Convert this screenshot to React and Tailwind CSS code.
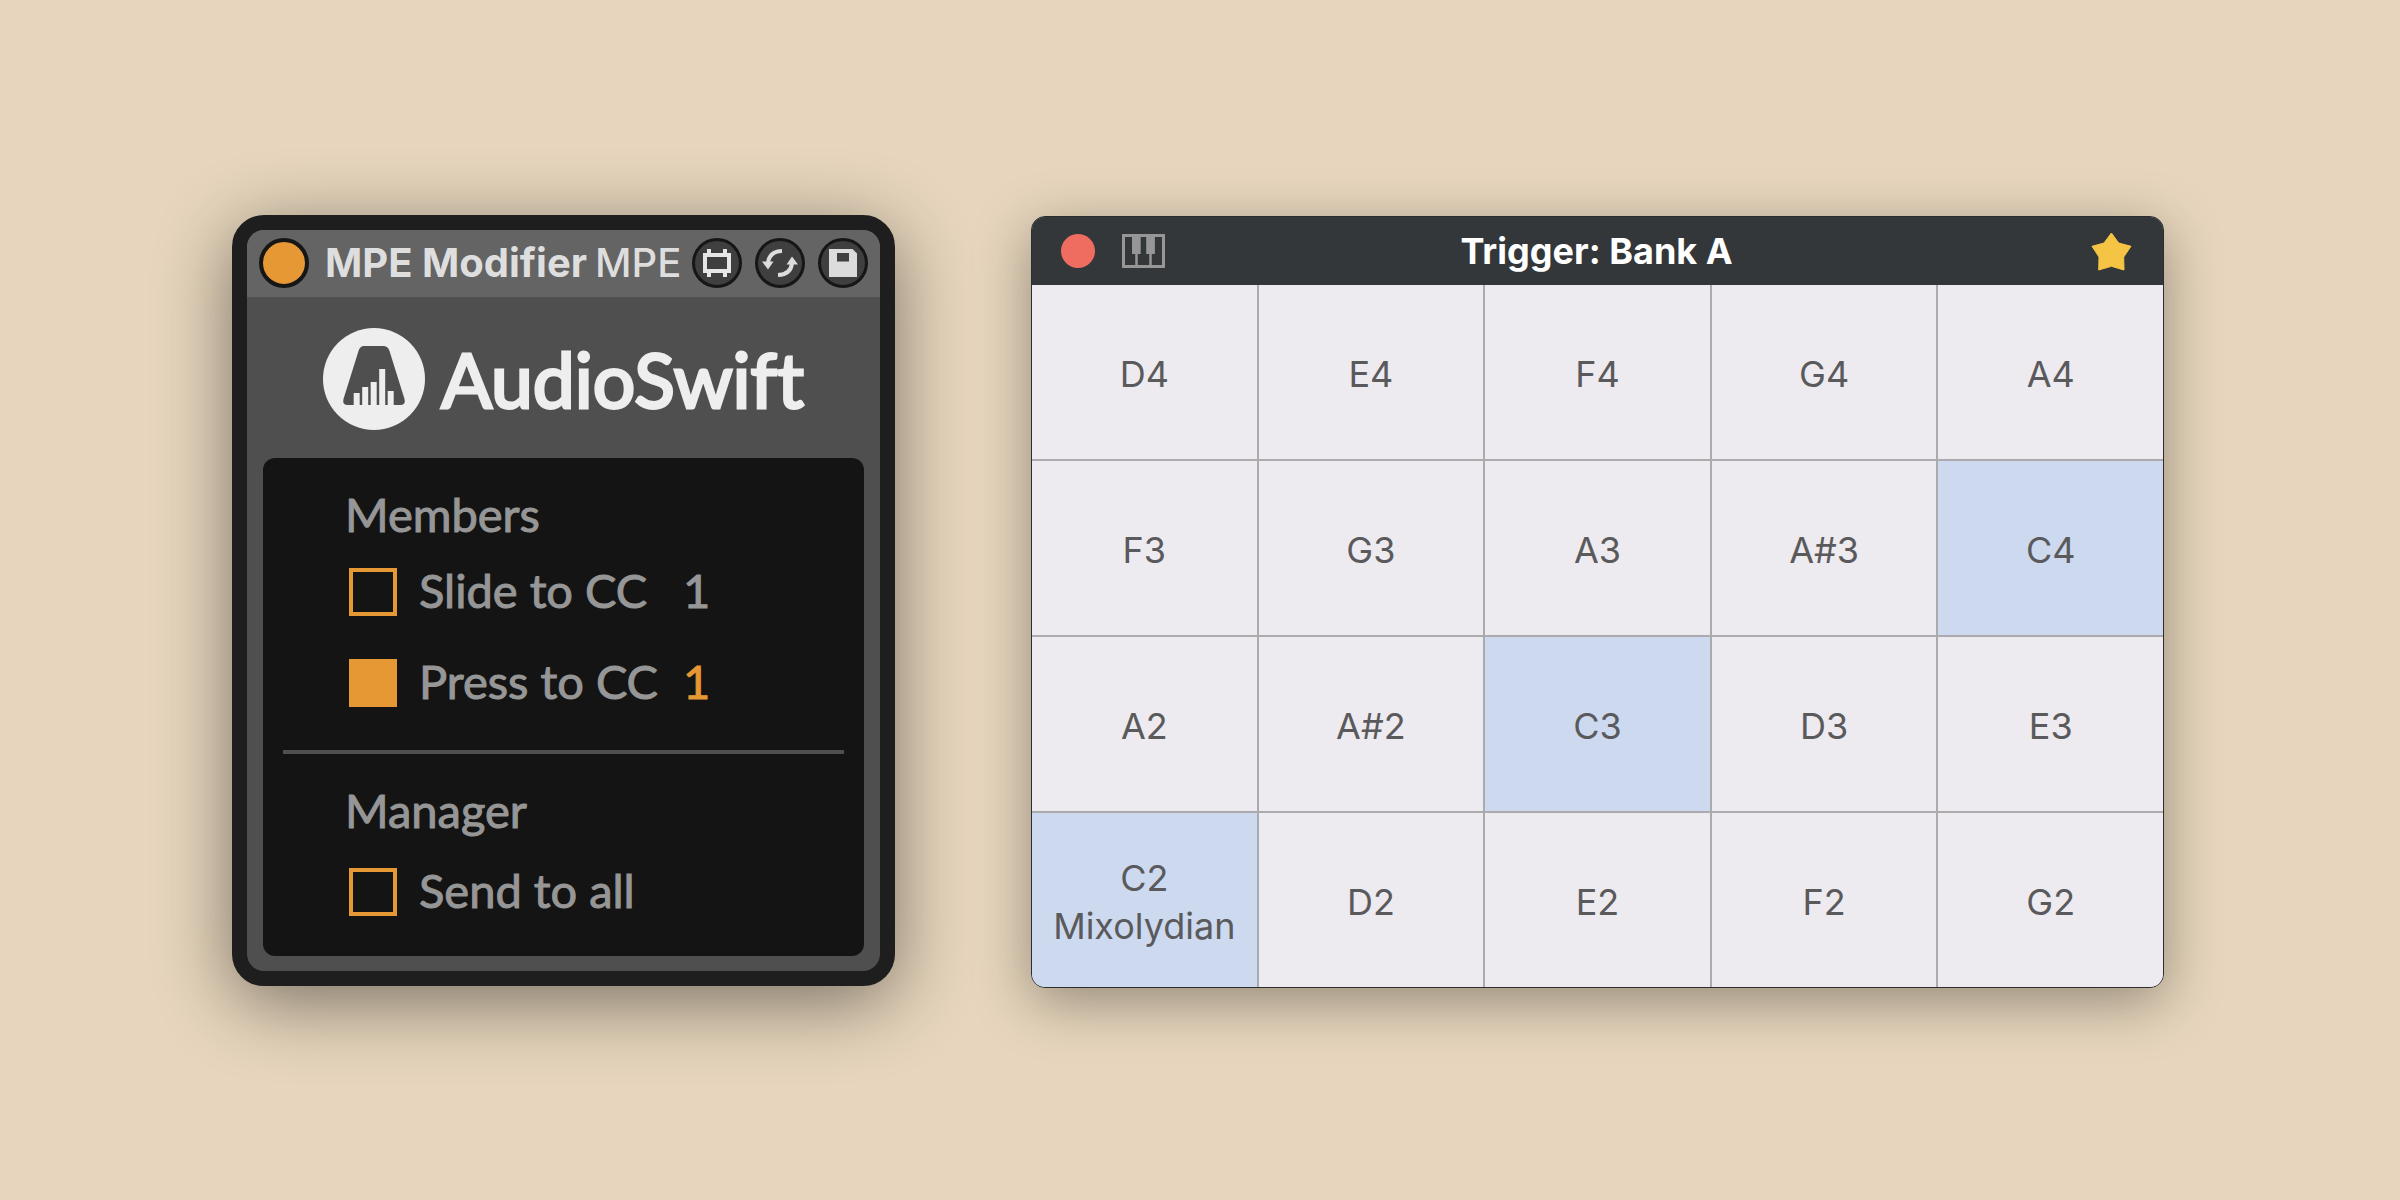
import { useState } from "react";

const pads = [
  ["D4"], ["E4"], ["F4"], ["G4"], ["A4"],
  ["F3"], ["G3"], ["A3"], ["A#3"], ["C4"],
  ["A2"], ["A#2"], ["C3"], ["D3"], ["E3"],
  ["C2", "Mixolydian"], ["D2"], ["E2"], ["F2"], ["G2"],
];

const AudioSwiftMark = () => (
  <svg viewBox="0 0 102 102" className="w-[102px] h-[102px] shrink-0">
    <circle cx="51" cy="51" r="51" fill="#eeeeee" />
    <path
      d="M41 18H60Q65 18 66.500 23L81.500 71Q83 77 77 77H25Q19 77 20.500 71L35.500 23Q37 18 41 18Z"
      fill="#4f4f4f"
    />
    <g fill="#eeeeee">
      <rect x="30.700" y="65" width="6" height="13" />
      <rect x="39.200" y="59" width="6" height="19" />
      <rect x="47.700" y="54" width="6" height="24" />
      <rect x="56.200" y="41" width="6" height="37" />
      <rect x="64.700" y="63" width="6" height="15" />
    </g>
  </svg>
);

const FrameIcon = () => (
  <svg viewBox="0 0 44 44" className="w-full h-full">
    <path d="M10 14H34V30H10Z" fill="none" stroke="#e6e6e6" strokeWidth="4" />
    <path d="M14 8v5M30 8v5M14 31v5M30 31v5" stroke="#e6e6e6" strokeWidth="4" />
  </svg>
);

const SwapIcon = () => (
  <svg viewBox="0 0 44 44" className="w-full h-full">
    <path d="M24 10Q11 10.500 10 22" fill="none" stroke="#dcdcdc" strokeWidth="4" />
    <path d="M4 20.500H15.500L10 28.500Z" fill="#dcdcdc" />
    <path d="M20 34Q33 33.500 34 22" fill="none" stroke="#dcdcdc" strokeWidth="4" />
    <path d="M28.500 23.500H40L34 15.500Z" fill="#dcdcdc" />
  </svg>
);

const SaveIcon = () => (
  <svg viewBox="0 0 44 44" className="w-full h-full">
    <path d="M8 8H31.500L36 12.500V36H8Z" fill="#dcdcdc" />
    <path d="M16 12H28V20.500H16Z" fill="#3f3f3f" />
  </svg>
);

const PianoIcon = () => (
  <svg viewBox="0 0 43 34" className="w-[43px] h-[34px]">
    <path d="M1.500 1.500H41.500V32.500H1.500Z" fill="none" stroke="#969696" strokeWidth="3" />
    <path d="M14.500 18V32M28.500 18V32" stroke="#969696" strokeWidth="2.500" />
    <path d="M10 2h8.700v18H10ZM24.200 2h8.700v18H24.200Z" fill="#969696" />
  </svg>
);

const StarIcon = () => (
  <svg viewBox="0 0 41 39" className="w-[41px] h-[39px]">
    <path
      d="M20.400 1L27.700 11L40 14.300L32.700 25L33 38L20.400 34.300L7.700 38L8 25L1 14.300L13 11Z"
      fill="#f6c444"
      stroke="#f6c444"
      strokeLinejoin="round"
    />
  </svg>
);

const RoundButton = ({ label, children }) => (
  <button
    aria-label={label}
    className="w-[50px] h-[50px] rounded-full border-3 border-[#161616] bg-[#3f3f3f]"
  >
    {children}
  </button>
);

const CheckRow = ({ id, label, checked, onChange, value, className = "" }) => (
  <div className={`flex items-start ${className}`}>
    <input
      id={id}
      type="checkbox"
      checked={checked}
      onChange={onChange}
      className="appearance-none shrink-0 w-12 h-12 mt-1.5 border-4 border-[#e59834] checked:bg-[#e59834]"
    />
    <label htmlFor={id} className="w-[264px] ml-[22px] whitespace-nowrap">
      {label}
    </label>
    {value && (
      <input
        type="text"
        aria-label={`${label} number`}
        defaultValue={value}
        className={`w-16 h-14 p-0 bg-transparent outline-none ${checked ? "text-[#e59834]" : ""}`}
      />
    )}
  </div>
);

const MpeModifier = () => {
  const [checks, setChecks] = useState({ slide: false, press: true, all: false });
  const toggle = (key) => () => setChecks({ ...checks, [key]: !checks[key] });

  return (
    <section className="rounded-[32px] border-[15px] border-[#1e1e1e] bg-[#1e1e1e] shadow-[0_16px_76px_rgba(0,0,0,0.48)]">
      <div className="rounded-[17px] overflow-hidden bg-[#4f4f4f] pb-[15px]">
        {/* Device title bar */}
        <header className="flex items-center h-[67px] px-3 bg-[#646464] text-[#dedede] font-['Inter',sans-serif] text-[40px] leading-[48px] whitespace-nowrap">
          <button
            aria-label="Device on"
            className="w-[50px] h-[50px] shrink-0 rounded-full border-4 border-[#161616] bg-[#e59834]"
          />
          <h1 className="ml-4 font-bold">MPE Modifier</h1>
          <span className="ml-2 font-medium">MPE</span>
          <div className="flex gap-[13px] ml-auto">
            <RoundButton label="Show frame"><FrameIcon /></RoundButton>
            <RoundButton label="Hot-swap"><SwapIcon /></RoundButton>
            <RoundButton label="Save preset"><SaveIcon /></RoundButton>
          </div>
        </header>

        {/* Brand */}
        <div className="flex items-center justify-center gap-4 pt-[31px] pb-7">
          <AudioSwiftMark />
          <p className="font-['Lato',sans-serif] text-[75px] leading-[88px] text-[#eeeeee] [-webkit-text-stroke:3px_#eeeeee] [font-variant-ligatures:none] whitespace-nowrap">
            AudioSwift
          </p>
        </div>

        {/* Settings */}
        <div className="mx-4 pt-7 pb-[38px] rounded-xl bg-[#141414] text-[#969696] font-['Lato',sans-serif] text-[47px] leading-[56px] [-webkit-text-stroke:1px_currentColor]">
          <div className="pl-[86px]">
            <h2 className="-ml-1">Members</h2>
            <CheckRow
              id="slide"
              label="Slide to CC"
              value="1"
              checked={checks.slide}
              onChange={toggle("slide")}
              className="mt-5"
            />
            <CheckRow
              id="press"
              label="Press to CC"
              value="1"
              checked={checks.press}
              onChange={toggle("press")}
              className="mt-[35px]"
            />
          </div>
          <hr className="mx-5 mt-[41px] border-t-4 border-[#4f4f4f]" />
          <div className="pl-[86px] pt-7">
            <h2 className="-ml-1">Manager</h2>
            <CheckRow
              id="all"
              label="Send to all"
              checked={checks.all}
              onChange={toggle("all")}
              className="mt-6"
            />
          </div>
        </div>
      </div>
    </section>
  );
};

const Trigger = () => {
  const [selected] = useState(["C2", "C3", "C4"]);

  return (
    <section className="mt-1 rounded-[14px] overflow-hidden border border-[#2b2d2e] bg-[#ababad] font-['Inter',sans-serif] text-[36px] leading-[48px] shadow-[0_14px_56px_rgba(0,0,0,0.36)]">
      <header className="grid grid-cols-[1fr_auto_1fr] items-center h-[68px] pl-[29px] pr-[31px] bg-[#343739]">
        <div className="flex items-center gap-[27px]">
          <button aria-label="Close" className="w-[34px] h-[34px] rounded-full bg-[#ee6c60]" />
          <button aria-label="Keyboard"><PianoIcon /></button>
        </div>
        <h2 className="font-bold text-white">Trigger: Bank A</h2>
        <button aria-label="Favourite" className="justify-self-end"><StarIcon /></button>
      </header>
      <div className="grid grid-cols-5 auto-rows-[minmax(174px,auto)] gap-0.5 text-[#5a5a5c]">
        {pads.map(([note, scale]) => (
          <button
            key={note}
            className={`pt-1 ${selected.includes(note) ? "bg-[#cdd9ef]" : "bg-[#edebef]"}`}
          >
            {note}
            {scale && <span className="block">{scale}</span>}
          </button>
        ))}
      </div>
    </section>
  );
};

export default function App() {
  return (
    <main className="min-h-screen grid grid-cols-[663fr_1133fr] items-center gap-[136px] pl-[232px] pr-[236px] bg-[#e7d6bd]">
      <MpeModifier />
      <Trigger />
    </main>
  );
}
